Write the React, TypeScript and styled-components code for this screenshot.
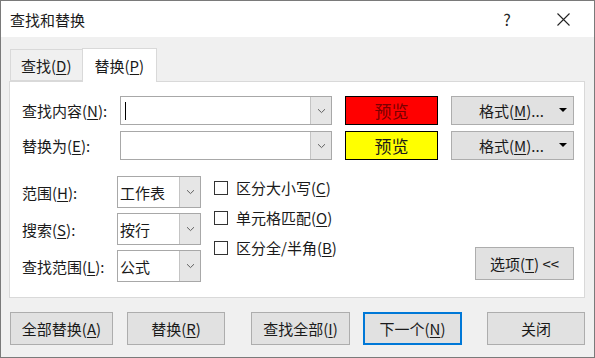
import { FC, ReactNode } from "react";
import styled, { createGlobalStyle } from "styled-components";

const GlobalStyle = createGlobalStyle`
  html, body {
    margin: 0;
    padding: 0;
    background: #f0f0f0;
  }
  * {
    box-sizing: border-box;
  }
`;

const FONT = '"Noto Sans CJK SC", "Noto Sans", sans-serif';

const Window = styled.div({
  width: 595,
  height: 358,
  border: "1px solid #7a7a7a",
  background: "#f0f0f0",
  fontFamily: FONT,
  fontSize: 15,
  color: "#1a1a1a",
  display: "flex",
  flexDirection: "column",
  overflow: "hidden",
});

const TitleBar = styled.div({
  height: 36,
  background: "#fff",
  display: "flex",
  alignItems: "center",
  paddingLeft: 9,
  paddingRight: 3,
  fontSize: 15,
  flexShrink: 0,
});

const Title = styled.div({
  flex: 1,
});

const TitleButton = styled.div({
  width: 56,
  height: 36,
  display: "flex",
  alignItems: "center",
  justifyContent: "center",
  fontSize: 16,
  color: "#222",
});

const Body = styled.div({
  padding: "11px 9px 0 8px",
  display: "flex",
  flexDirection: "column",
});

const TabRow = styled.div({
  display: "flex",
  alignItems: "flex-end",
  height: 33,
  paddingLeft: 1,
  position: "relative",
  zIndex: 1,
});

const Tab = styled.div<{ $active?: boolean }>`
  height: ${(p) => (p.$active ? 34 : 32)}px;
  padding: 0 ${(p) => (p.$active ? 12 : 10)}px;
  margin-bottom: ${(p) => (p.$active ? -1 : 0)}px;
  display: flex;
  align-items: center;
  background: ${(p) => (p.$active ? "#fff" : "#f0f0f0")};
  border: 1px solid #d9d9d9;
  border-bottom: ${(p) => (p.$active ? "none" : "1px solid #d9d9d9")};
  border-right: ${(p) => (p.$active ? "1px solid #d9d9d9" : "none")};
`;

const Panel = styled.div({
  height: 217,
  background: "#fff",
  border: "1px solid #d9d9d9",
  padding: "14px 10px 0 12px",
  display: "flex",
  flexDirection: "column",
});

const FindRow = styled.div({
  display: "flex",
  alignItems: "center",
  height: 29,
  marginBottom: 6,
});

const Label = styled.div<{ $width: number }>`
  width: ${(p) => p.$width}px;
  flex-shrink: 0;
  white-space: nowrap;
`;

const Combo = styled.div<{ $width: number; $height: number }>`
  width: ${(p) => p.$width}px;
  height: ${(p) => p.$height}px;
  border: 1px solid #a8a8a8;
  display: flex;
  background: #fff;
  flex-shrink: 0;
`;

const ComboText = styled.div({
  flex: 1,
  display: "flex",
  alignItems: "center",
  paddingLeft: 2,
  whiteSpace: "nowrap",
});

const Caret = styled.div({
  width: 1,
  height: 18,
  background: "#000",
  marginLeft: 2,
});

const ComboButton = styled.div({
  width: 21,
  background: "#e6e6e6",
  borderLeft: "1px solid #c4c4c4",
  display: "flex",
  alignItems: "center",
  justifyContent: "center",
});

const Preview = styled.div<{ $bg: string; $fg: string }>`
  width: 93px;
  height: 29px;
  margin-left: 13px;
  border: 1px solid #000;
  background: ${(p) => p.$bg};
  color: ${(p) => p.$fg};
  display: flex;
  align-items: center;
  justify-content: center;
  font-size: 17px;
  flex-shrink: 0;
`;

const Button = styled.div<{ $width: number; $height: number; $default?: boolean }>`
  width: ${(p) => p.$width}px;
  height: ${(p) => p.$height}px;
  background: #e1e1e1;
  border: ${(p) => (p.$default ? "2px solid #0078d7" : "1px solid #adadad")};
  display: flex;
  align-items: center;
  justify-content: center;
  flex-shrink: 0;
  white-space: nowrap;
  position: relative;
`;

const FormatButton = styled(Button)({
  marginLeft: 13,
  justifyContent: "flex-start",
  paddingLeft: 27,
});

const DropArrow = styled.span({
  position: "absolute",
  right: 6,
  top: 11,
  width: 0,
  height: 0,
  borderLeft: "4px solid transparent",
  borderRight: "4px solid transparent",
  borderTop: "4px solid #000",
});

const Lower = styled.div({
  marginTop: 10,
  display: "flex",
});

const SelectColumn = styled.div({
  display: "flex",
  flexDirection: "column",
  gap: 5,
  width: 192,
  flexShrink: 0,
});

const SelectRow = styled.div({
  display: "flex",
  alignItems: "center",
});

const CheckColumn = styled.div({
  display: "flex",
  flexDirection: "column",
  gap: 9,
  paddingTop: 1,
});

const CheckRow = styled.label({
  display: "flex",
  alignItems: "center",
  height: 21,
  gap: 8,
});

const Box = styled.span({
  width: 14,
  height: 14,
  border: "1px solid #333",
  background: "#fff",
  flexShrink: 0,
});

const OptionsArea = styled.div({
  flex: 1,
  display: "flex",
  alignItems: "flex-end",
  justifyContent: "flex-end",
  paddingBottom: 2,
});

const Footer = styled.div({
  display: "flex",
  marginTop: 14,
  paddingLeft: 1,
});

const U = styled.span({
  textDecoration: "underline",
  textUnderlineOffset: 2,
  textDecorationThickness: 1,
});

const Chevron: FC = () => (
  <svg width="9" height="6" viewBox="0 0 9 6">
    <path d="M1 1.2 L4.5 4.6 L8 1.2" fill="none" stroke="#606060" strokeWidth="1" />
  </svg>
);

const Mn: FC<{ text: string; k: string; tail?: string }> = ({ text, k, tail = "" }) => (
  <span>
    {text}(<U>{k}</U>){tail}
  </span>
);

const Select: FC<{ children: ReactNode }> = ({ children }) => (
  <Combo $width={84} $height={32}>
    <ComboText>{children}</ComboText>
    <ComboButton>
      <Chevron />
    </ComboButton>
  </Combo>
);

const App: FC = () => (
  <>
    <GlobalStyle />
    <Window>
      <TitleBar>
        <Title>查找和替换</Title>
        <TitleButton>?</TitleButton>
        <TitleButton>
          <svg width="13" height="13" viewBox="0 0 13 13">
            <path d="M0.5 0.5 L12.5 12.5 M12.5 0.5 L0.5 12.5" stroke="#222" strokeWidth="1.1" />
          </svg>
        </TitleButton>
      </TitleBar>
      <Body>
        <TabRow>
          <Tab>
            <Mn text="查找" k="D" />
          </Tab>
          <Tab $active>
            <Mn text="替换" k="P" />
          </Tab>
        </TabRow>
        <Panel>
          <FindRow>
            <Label $width={98}>
              <Mn text="查找内容" k="N" tail=":" />
            </Label>
            <Combo $width={212} $height={29}>
              <ComboText>
                <Caret />
              </ComboText>
              <ComboButton>
                <Chevron />
              </ComboButton>
            </Combo>
            <Preview $bg="#ff0000" $fg="#7a0000">
              预览
            </Preview>
            <FormatButton $width={123} $height={29}>
              <Mn text="格式" k="M" tail="..." />
              <DropArrow />
            </FormatButton>
          </FindRow>
          <FindRow>
            <Label $width={98}>
              <Mn text="替换为" k="E" tail=":" />
            </Label>
            <Combo $width={212} $height={29}>
              <ComboText />
              <ComboButton>
                <Chevron />
              </ComboButton>
            </Combo>
            <Preview $bg="#ffff00" $fg="#1a1a1a">
              预览
            </Preview>
            <FormatButton $width={123} $height={29}>
              <Mn text="格式" k="M" tail="..." />
              <DropArrow />
            </FormatButton>
          </FindRow>
          <Lower>
            <SelectColumn>
              <SelectRow>
                <Label $width={95}>
                  <Mn text="范围" k="H" tail=":" />
                </Label>
                <Select>工作表</Select>
              </SelectRow>
              <SelectRow>
                <Label $width={95}>
                  <Mn text="搜索" k="S" tail=":" />
                </Label>
                <Select>按行</Select>
              </SelectRow>
              <SelectRow>
                <Label $width={95}>
                  <Mn text="查找范围" k="L" tail=":" />
                </Label>
                <Select>公式</Select>
              </SelectRow>
            </SelectColumn>
            <CheckColumn>
              <CheckRow>
                <Box />
                <Mn text="区分大小写" k="C" />
              </CheckRow>
              <CheckRow>
                <Box />
                <Mn text="单元格匹配" k="O" />
              </CheckRow>
              <CheckRow>
                <Box />
                <Mn text="区分全/半角" k="B" />
              </CheckRow>
            </CheckColumn>
            <OptionsArea>
              <Button $width={99} $height={33}>
                <Mn text="选项" k="T" tail=" <<" />
              </Button>
            </OptionsArea>
          </Lower>
        </Panel>
        <Footer>
          <Button $width={103} $height={33}>
            <Mn text="全部替换" k="A" />
          </Button>
          <Button $width={98} $height={33} style={{ marginLeft: 14 }}>
            <Mn text="替换" k="R" />
          </Button>
          <Button $width={99} $height={33} style={{ marginLeft: 26 }}>
            <Mn text="查找全部" k="I" />
          </Button>
          <Button $width={99} $height={33} $default style={{ marginLeft: 13 }}>
            <Mn text="下一个" k="N" />
          </Button>
          <Button $width={98} $height={33} style={{ marginLeft: 25 }}>
            关闭
          </Button>
        </Footer>
      </Body>
    </Window>
  </>
);

export default App;
